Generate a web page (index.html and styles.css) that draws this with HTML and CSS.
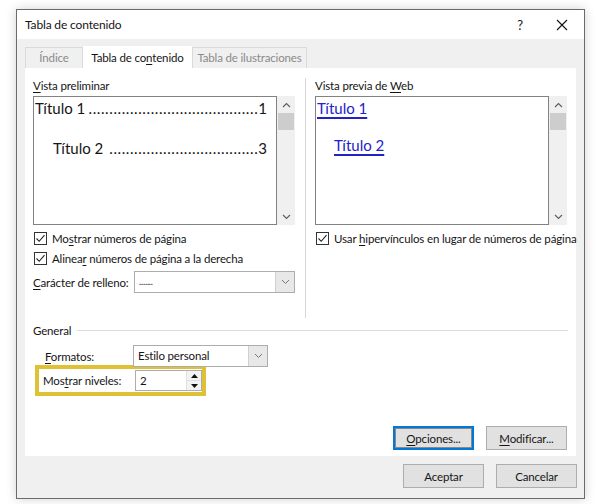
FILE: index.html
```html
<!DOCTYPE html>
<html lang="es">
<head>
<meta charset="utf-8">
<link rel="stylesheet" href="styles.css">
</head>
<body>
<div class="dialog">
  <div class="titlebar">
    <span class="title">Tabla de contenido</span>
    <span class="help">?</span>
    <span class="close"><svg width="12" height="12" viewBox="0 0 12 12"><path d="M1 1L11 11M11 1L1 11" stroke="#111" stroke-width="1.1" fill="none"/></svg></span>
  </div>
  <div class="tabs">
    <div class="tab">Índice</div>
    <div class="tab active">Tabla de co<u>n</u>tenido</div>
    <div class="tab">Tabla de ilustraciones</div>
  </div>
  <div class="panel">
    <div class="cols">
      <div class="col left">
        <div class="label"><u>V</u>ista preliminar</div>
        <div class="listbox">
          <div class="listcontent">
            <div class="toc l1"><span class="tname">Título 1</span><span class="dots">.........................................</span><span class="tnum">1</span></div>
            <div class="toc l2"><span class="tname">Título 2</span><span class="dots">....................................</span><span class="tnum">3</span></div>
          </div>
          <div class="scroll">
            <span class="arr"><svg width="9" height="6" viewBox="0 0 9 6"><path d="M1 5L4.5 1.5L8 5" stroke="#606060" stroke-width="1.2" fill="none"/></svg></span>
            <span class="thumb"></span>
            <span class="fill"></span>
            <span class="arr"><svg width="9" height="6" viewBox="0 0 9 6"><path d="M1 1L4.5 4.5L8 1" stroke="#606060" stroke-width="1.2" fill="none"/></svg></span>
          </div>
        </div>
        <div class="check first"><span class="cb"><svg width="11" height="11" viewBox="0 0 11 11"><path d="M1.5 5.5L4.2 8.3L9.5 2.2" stroke="#222" stroke-width="1.1" fill="none"/></svg></span><span class="ctxt">Mo<u>s</u>trar números de página</span></div>
        <div class="check"><span class="cb"><svg width="11" height="11" viewBox="0 0 11 11"><path d="M1.5 5.5L4.2 8.3L9.5 2.2" stroke="#222" stroke-width="1.1" fill="none"/></svg></span><span class="ctxt">Alinea<u>r</u> números de página a la derecha</span></div>
        <div class="field relleno">
          <span class="flabel"><u>C</u>arácter de relleno:</span>
          <div class="combo wide"><span class="ctext small">.......</span><span class="cbtn"><svg width="9" height="6" viewBox="0 0 9 6"><path d="M1 1L4.5 4.5L8 1" stroke="#777" stroke-width="1" fill="none"/></svg></span></div>
        </div>
      </div>
      <div class="sep"></div>
      <div class="col right">
        <div class="label">Vista previa de <u>W</u>eb</div>
        <div class="listbox webbox">
          <div class="listcontent">
            <div class="web l1"><a>Título 1</a></div>
            <div class="web l2"><a>Título 2</a></div>
          </div>
          <div class="scroll">
            <span class="arr"><svg width="9" height="6" viewBox="0 0 9 6"><path d="M1 5L4.5 1.5L8 5" stroke="#606060" stroke-width="1.2" fill="none"/></svg></span>
            <span class="thumb"></span>
            <span class="fill"></span>
            <span class="arr"><svg width="9" height="6" viewBox="0 0 9 6"><path d="M1 1L4.5 4.5L8 1" stroke="#606060" stroke-width="1.2" fill="none"/></svg></span>
          </div>
        </div>
        <div class="check first"><span class="cb"><svg width="11" height="11" viewBox="0 0 11 11"><path d="M1.5 5.5L4.2 8.3L9.5 2.2" stroke="#222" stroke-width="1.1" fill="none"/></svg></span><span class="ctxt">Usar <u>h</u>ipervínculos en lugar de números de página</span></div>
      </div>
    </div>
    <div class="general">
      <div class="ghead"><span>General</span><span class="gline"></span></div>
      <div class="field formatos">
        <span class="flabel"><u>F</u>ormatos:</span>
        <div class="combo mid"><span class="ctext">Estilo personal</span><span class="cbtn"><svg width="9" height="6" viewBox="0 0 9 6"><path d="M1 1L4.5 4.5L8 1" stroke="#777" stroke-width="1" fill="none"/></svg></span></div>
      </div>
      <div class="highlight">
        <span class="flabel">Mos<u>t</u>rar niveles:</span>
        <div class="spin"><span class="ctext">2</span><span class="spinbtns"><span class="sb"><svg width="7" height="4" viewBox="0 0 7 4"><path d="M0 4L3.5 0L7 4Z" fill="#111"/></svg></span><span class="sb"><svg width="7" height="4" viewBox="0 0 7 4"><path d="M0 0L3.5 4L7 0Z" fill="#111"/></svg></span></span></div>
      </div>
    </div>
    <div class="panelbtns">
      <button class="btn focus"><u>O</u>pciones...</button>
      <button class="btn"><u>M</u>odificar...</button>
    </div>
  </div>
  <div class="footer">
    <button class="btn">Aceptar</button>
    <button class="btn">Cancelar</button>
  </div>
</div>
</body>
</html>
```
FILE: styles.css
```css
* { box-sizing: border-box; }
html, body { margin: 0; padding: 0; }
body {
  background: #ffffff;
  font-family: Lato, "Noto Sans", sans-serif;
  font-size: 11.5px;
  letter-spacing: -0.15px;
  color: #151515;
  width: 599px;
  height: 504px;
  overflow: hidden;
}
u { text-decoration: underline; text-underline-offset: 2px; }
.dialog {
  margin: 9px 0 0 16px;
  width: 569px;
  height: 490px;
  border: 1px solid #6b6b6b;
  background: #f0f0f0;
  box-shadow: 0 0 10px rgba(0,0,0,0.18);
  display: flex;
  flex-direction: column;
}
.titlebar {
  height: 29px;
  background: #fff;
  display: flex;
  align-items: center;
  padding-left: 8px;
}
.title { font-size: 12px; flex: 1; }
.help { font-size: 13px; width: 20px; margin-right: 26px; text-align: center; }
.close { width: 12px; margin-right: 16px; display: flex; }
.tabs {
  display: flex;
  padding-left: 8px;
  margin-top: 7px;
  height: 22px;
}
.tab {
  border: 1px solid #dadada;
  border-bottom: none;
  background: #f0f0f0;
  color: #8a8a8a;
  padding: 3px 0 0;
  text-align: center;
  margin-top: 1px;
  white-space: nowrap;
}
.tab:nth-child(1) { width: 58px; }
.tab:nth-child(2) { width: 109px; }
.tab:nth-child(3) { width: 115px; }
.tab.active {
  background: #fff;
  color: #151515;
  border-color: #fff;
  margin-top: 0;
  padding-top: 4px;
}
.panel {
  margin: 0 8px 0 8px;
  height: 388px;
  background: #fff;
  padding: 10px 8px 0 8px;
  display: flex;
  flex-direction: column;
}
.cols { display: flex; }
.col.left { width: 262px; }
.col.right { width: 252px; }
.sep { width: 1px; background: #d6d6d6; margin: 0 9px 0 10px; height: 240px; }
.label { height: 16px; line-height: 16px; }
.listbox {
  margin-top: 2px;
  height: 129px;
  display: flex;
}
.listcontent {
  width: 244px;
  border: 1px solid #828282;
  padding: 1px 9px 0 1px;
  font-size: 15px;
  letter-spacing: 0;
}
.webbox .listcontent { width: 234px; }
.scroll {
  width: 18px;
  background: #f0f0f0;
  display: flex;
  flex-direction: column;
  align-items: center;
}
.arr { height: 17px; display: flex; align-items: center; justify-content: center; }
.thumb { width: 16px; height: 17px; background: #cdcdcd; }
.fill { flex: 1; }
.toc { display: flex; height: 20px; line-height: 20px; white-space: nowrap; }
.toc .tname { flex: none; margin-right: 3px; }
.toc .dots { flex: 1 1 0; min-width: 0; overflow: hidden; letter-spacing: 0.6px; text-align: right; }
.toc .tnum { flex: none; }
.toc.l2 { padding-left: 18px; margin-top: 20px; }
.web { height: 20px; line-height: 20px; }
.web a { color: #2222c8; text-decoration: underline; text-underline-offset: 3px; text-decoration-thickness: 1.5px; }
.web.l2 { padding-left: 17px; margin-top: 17px; }
.check { display: flex; align-items: center; height: 20px; padding-left: 1px; white-space: nowrap; }
.check.first { margin-top: 3px; }
.cb {
  width: 13px; height: 13px;
  border: 1px solid #333;
  background: #fff;
  margin-right: 5px;
  display: flex; align-items: center; justify-content: center;
  flex: none;
}
.field { display: flex; align-items: center; }
.relleno { margin-top: 3px; }
.flabel { width: 101px; white-space: nowrap; }
.combo {
  height: 22px;
  border: 1px solid #adadad;
  display: flex;
  background: #fff;
}
.combo.wide { width: 161px; }
.combo.mid { width: 135px; }
.ctext { flex: 1; padding-left: 4px; line-height: 20px; }
.ctext.small { font-size: 9px; }
.cbtn {
  width: 19px;
  background: #e8e8e8;
  border-left: 1px solid #d0d0d0;
  display: flex; align-items: center; justify-content: center;
}
.general { margin-top: 4px; }
.ghead { display: flex; align-items: center; height: 16px; }
.gline { flex: 1; height: 1px; background: #dcdcdc; margin-left: 6px; }
.formatos { margin-top: 7px; padding-left: 12px; }
.formatos .flabel { width: 88px; }
.highlight {
  margin-left: 2px;
  margin-top: -2px;
  width: 171px;
  height: 31px;
  border: 4px solid #dfc135;
  display: flex;
  align-items: center;
  padding-left: 4px;
}
.highlight .flabel { width: 92px; }
.spin {
  width: 67px; height: 21px;
  border: 1px solid #adadad;
  display: flex;
}
.spinbtns { width: 15px; display: flex; flex-direction: column; border-left: 1px solid #e0e0e0; }
.sb { flex: 1; display: flex; align-items: center; justify-content: center; background: #f3f3f3; }
.sb + .sb { border-top: 1px solid #e0e0e0; }
.panelbtns {
  display: flex;
  justify-content: flex-end;
  gap: 12px;
  margin-top: 30px;
  padding-right: 1px;
}
.btn {
  font-family: inherit;
  font-size: 11.5px;
  letter-spacing: -0.15px;
  color: #151515;
  width: 81px;
  height: 24px;
  background: #e1e1e1;
  border: 1px solid #adadad;
  padding: 0;
}
.btn.focus { border: 2px solid #0078d7; box-shadow: inset 0 0 0 1px #888; }
.footer {
  display: flex;
  justify-content: flex-end;
  gap: 12px;
  padding: 8px 7px 0 0;
}
```
